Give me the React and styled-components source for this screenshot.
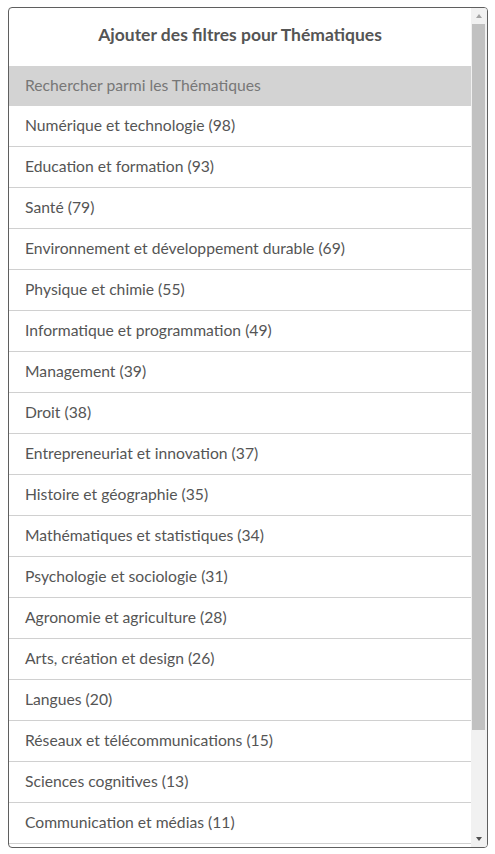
import styled, { createGlobalStyle } from 'styled-components';

const GlobalStyle = createGlobalStyle`
  body {
    margin: 0;
    background: #fff;
    font-family: Lato, "Open Sans", sans-serif;
  }
`;

const Panel = styled.div`
  margin: 7px 8px;
  width: 480px;
  height: 841px;
  box-sizing: border-box;
  border: 1px solid #5f5f5f;
  border-radius: 4px;
  overflow: hidden;
  display: flex;
  background: #fff;
`;

const Content = styled.div`
  flex: 1;
  min-width: 0;
  overflow: hidden;
`;

const ScrollBar = styled.div`
  width: 16px;
  flex-shrink: 0;
  display: flex;
  flex-direction: column;
  background: #f1f1f1;
`;

const ArrowButton = styled.div`
  height: 16px;
  flex-shrink: 0;
  display: flex;
  align-items: center;
  justify-content: center;

  &::before {
    content: '';
    width: 0;
    height: 0;
    border-left: 3.5px solid transparent;
    border-right: 3.5px solid transparent;
    ${({ $dir, $color }) =>
      $dir === 'up'
        ? `border-bottom: 4px solid ${$color};`
        : `border-top: 4px solid ${$color};`}
  }
`;

const Track = styled.div`
  flex: 1;
  padding: 0 2px 0 1px;
`;

const Thumb = styled.div`
  height: ${({ $size }) => $size}px;
  background: #c1c1c1;
`;

const Title = styled.h2`
  margin: 0;
  height: 58px;
  padding-bottom: 5px;
  box-sizing: border-box;
  display: flex;
  align-items: center;
  justify-content: center;
  font-size: 17.5px;
  font-weight: 700;
  color: #555;
`;

const Search = styled.input`
  display: block;
  width: 100%;
  height: 40px;
  box-sizing: border-box;
  border: none;
  outline: none;
  padding: 0 16px 3px;
  background: #d3d3d3;
  font-family: inherit;
  font-size: 15.7px;
  color: #555;

  &::placeholder {
    color: #777;
  }
`;

const List = styled.ul`
  list-style: none;
  margin: 0;
  padding: 0;
`;

const Item = styled.li`
  height: 41px;
  box-sizing: border-box;
  display: flex;
  align-items: center;
  padding: 0 16px 3px;
  border-bottom: 1px solid #d0d0d0;
  font-size: 15.7px;
  color: #555;
  cursor: pointer;
`;

const topics = [
  ['Numérique et technologie', 98],
  ['Education et formation', 93],
  ['Santé', 79],
  ['Environnement et développement durable', 69],
  ['Physique et chimie', 55],
  ['Informatique et programmation', 49],
  ['Management', 39],
  ['Droit', 38],
  ['Entrepreneuriat et innovation', 37],
  ['Histoire et géographie', 35],
  ['Mathématiques et statistiques', 34],
  ['Psychologie et sociologie', 31],
  ['Agronomie et agriculture', 28],
  ['Arts, création et design', 26],
  ['Langues', 20],
  ['Réseaux et télécommunications', 15],
  ['Sciences cognitives', 13],
  ['Communication et médias', 11],
  ['Économie et finance', 10],
  ['Marketing', 9],
  ['Philosophie', 7],
];

export default function App() {
  return (
    <>
      <GlobalStyle />
      <Panel>
        <Content>
          <Title>Ajouter des filtres pour Thématiques</Title>
          <Search placeholder="Rechercher parmi les Thématiques" />
          <List>
            {topics.map(([name, count]) => (
              <Item key={name}>
                {name} ({count})
              </Item>
            ))}
          </List>
        </Content>
        <ScrollBar>
          <ArrowButton $dir="up" $color="#a3a3a3" />
          <Track>
            <Thumb $size={706} />
          </Track>
          <ArrowButton $dir="down" $color="#505050" />
        </ScrollBar>
      </Panel>
    </>
  );
}
